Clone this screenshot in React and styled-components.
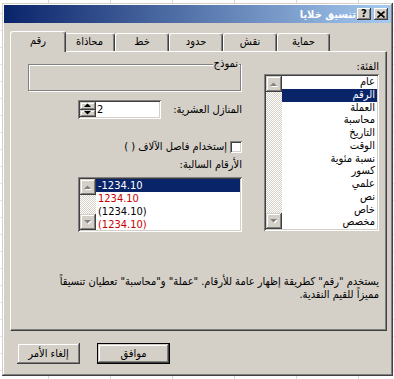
import styled, { createGlobalStyle } from "styled-components"

const Global = createGlobalStyle`
  html, body { margin: 0; }
  body {
    background-color: #fff;
    background-image:
      linear-gradient(to right, #d6d6d6 1px, transparent 1px),
      linear-gradient(to bottom, #e2e2e2 1px, transparent 1px);
    background-size: 62px 100%, 100% 17px;
    background-position: 48px 0, 0 13px;
    font-family: "DejaVu Sans Condensed", "DejaVu Sans", sans-serif;
    font-size: 11px;
    color: #000;
  }
`

const raised = `
  box-shadow: inset -1px -1px #404040, inset 1px 1px #d4d0c8,
    inset -2px -2px #808080, inset 2px 2px #fff;
`
const sunken = `
  box-shadow: inset 1px 1px #808080, inset -1px -1px #fff,
    inset 2px 2px #404040, inset -2px -2px #d4d0c8;
`

const Page = styled.div`
  padding: 3px 0 0 2px;
`

const Dialog = styled.div`
  width: 391px;
  height: 373px;
  box-sizing: border-box;
  padding: 2px;
  background: #d4d0c8;
  ${raised}
  display: flex;
  flex-direction: column;
`

const TitleBar = styled.div`
  height: 18px;
  display: flex;
  align-items: center;
  justify-content: flex-end;
  padding-right: 3px;
  background: linear-gradient(to right, #0a246a, #a6caf0);
  color: #fff;
  font-weight: bold;
`

const TitleText = styled.span`
  direction: rtl;
  margin-right: 1px;
`

const CaptionBtn = styled.div`
  width: 14px;
  height: 12px;
  box-sizing: border-box;
  margin-left: ${({ gap }) => gap || 0}px;
  background: #d4d0c8;
  box-shadow: inset -1px -1px #404040, inset 1px 1px #fff, inset -2px -2px #808080;
  display: flex;
  align-items: center;
  justify-content: center;
  color: #000;
  font-family: "DejaVu Sans", sans-serif;
  font-size: 10px;
  font-weight: bold;
  line-height: 1;
`

const Body = styled.div`
  flex: 1;
  padding: 8px 4px 0 6px;
  display: flex;
  flex-direction: column;
`

const TabStrip = styled.div`
  height: 20px;
  display: flex;
  align-items: flex-end;
  padding-left: 2px;
  position: relative;
  z-index: 1;
`

const Tab = styled.div`
  width: ${({ w, active }) => (active ? w + 4 : w)}px;
  height: ${({ active }) => (active ? 21 : 18)}px;
  margin: ${({ active }) => (active ? "0 -2px -1px -2px" : "0")};
  position: relative;
  z-index: ${({ active }) => (active ? 2 : 1)};
  box-sizing: border-box;
  background: #d4d0c8;
  border-top: 1px solid #fff;
  border-left: 1px solid #fff;
  border-right: 1px solid #404040;
  border-radius: 3px 3px 0 0;
  box-shadow: inset -1px 0 #808080;
  text-align: center;
  line-height: ${({ active }) => (active ? 17 : 15)}px;
  direction: rtl;
`

const Panel = styled.div`
  height: 280px;
  box-sizing: border-box;
  border-top: 1px solid #fff;
  border-left: 1px solid #fff;
  border-right: 1px solid #404040;
  border-bottom: 1px solid #404040;
  box-shadow: inset -1px -1px #808080;
  padding: 8px 7px 0 17px;
  direction: rtl;
`

const Columns = styled.div`
  display: flex;
  gap: 22px;
`

const CategoryCol = styled.div`
  width: 115px;
  display: flex;
  flex-direction: column;
`

const OptionsCol = styled.div`
  width: 214px;
  display: flex;
  flex-direction: column;
`

const Label = styled.div`
  height: ${({ h }) => h || 14}px;
  line-height: ${({ h }) => h || 14}px;
  margin-top: ${({ mt }) => mt || 0}px;
  white-space: nowrap;
`

const List = styled.div`
  width: ${({ w }) => w}px;
  height: ${({ h }) => h}px;
  box-sizing: border-box;
  padding: 2px;
  background: #fff;
  ${sunken}
  display: flex;
  direction: ltr;
`

const Scrollbar = styled.div`
  width: 16px;
  display: flex;
  flex-direction: column;
  justify-content: space-between;
  background: repeating-conic-gradient(#d4d0c8 0 25%, #fff 0 50%) 0 0 / 2px 2px;
`

const ArrowBtn = styled.div`
  width: 16px;
  height: 16px;
  background: #d4d0c8;
  ${raised}
  display: flex;
  align-items: center;
  justify-content: center;
`

const Items = styled.div`
  flex: 1;
  overflow: hidden;
  direction: ${({ rtl }) => (rtl ? "rtl" : "ltr")};
`

const Row = styled.div`
  height: ${({ h }) => h || 13}px;
  line-height: ${({ h }) => h || 13}px;
  padding: 0 2px;
  white-space: nowrap;
  color: ${({ sel, red }) => (sel ? "#fff" : red ? "#cc0000" : "#000")};
  background: ${({ sel }) => (sel ? "#0a246a" : "transparent")};
`

const GroupBox = styled.div`
  height: 27px;
  margin: 4px 1px 0 0;
  box-sizing: border-box;
  position: relative;
  border: 1px solid #808080;
  box-shadow: inset 1px 1px #fff, 1px 1px #fff;
`

const GroupLabel = styled.span`
  position: absolute;
  top: -8px;
  right: 1px;
  padding: 0 1px;
  background: #d4d0c8;
  line-height: 13px;
`

const FieldRow = styled.div`
  display: flex;
  align-items: center;
  margin-top: ${({ mt }) => mt || 0}px;
  gap: ${({ gap }) => gap || 0}px;
`

const SpinBox = styled.div`
  width: 83px;
  height: 19px;
  box-sizing: border-box;
  padding: 2px;
  background: #fff;
  ${sunken}
  display: flex;
  direction: ltr;
`

const SpinButtons = styled.div`
  width: 16px;
  display: flex;
  flex-direction: column;
`

const SpinBtn = styled.div`
  flex: 1;
  background: #d4d0c8;
  ${raised}
  display: flex;
  align-items: center;
  justify-content: center;
`

const SpinValue = styled.span`
  padding-left: 1px;
  line-height: 15px;
`

const CheckBox = styled.div`
  width: 12px;
  height: 12px;
  box-sizing: border-box;
  background: #fff;
  ${sunken}
`

const Description = styled.div`
  margin-top: 43px;
  line-height: 13px;
  white-space: nowrap;
`

const ButtonRow = styled.div`
  display: flex;
  gap: 17px;
  margin-top: 12px;
  padding-left: 7px;
`

const Button = styled.div`
  width: ${({ w }) => w}px;
  height: 21px;
  box-sizing: border-box;
  background: #d4d0c8;
  ${raised}
  border: ${({ primary }) => (primary ? "1px solid #000" : "none")};
  display: flex;
  align-items: center;
  justify-content: center;
  direction: rtl;
`

const Arrow = ({ up, color = "#808080", shadow = true }) => (
  <svg width="8" height="5" viewBox="0 0 8 5">
    {shadow && (
      <polygon
        points={up ? "1,5 8,5 4.5,1.5" : "1,1 8,1 4.5,4.5"}
        fill="#fff"
      />
    )}
    <polygon points={up ? "0,4 7,4 3.5,0.5" : "0,0 7,0 3.5,3.5"} fill={color} />
  </svg>
)

const categories = [
  "عام",
  "الرقم",
  "العملة",
  "محاسبة",
  "التاريخ",
  "الوقت",
  "نسبة مئوية",
  "كسور",
  "علمي",
  "نص",
  "خاص",
  "مخصص",
]

const negatives = [
  { t: "-1234.10", sel: true },
  { t: "1234.10", red: true },
  { t: "(1234.10)" },
  { t: "(1234.10)", red: true },
]

const tabs = [
  { t: "رقم", w: 52, active: true },
  { t: "محاذاة", w: 51 },
  { t: "خط", w: 54 },
  { t: "حدود", w: 54 },
  { t: "نقش", w: 54 },
  { t: "حماية", w: 53 },
]

const ListScroll = () => (
  <Scrollbar>
    <ArrowBtn>
      <Arrow up />
    </ArrowBtn>
    <ArrowBtn>
      <Arrow />
    </ArrowBtn>
  </Scrollbar>
)

export default function App() {
  return (
    <Page>
      <Global />
      <Dialog>
        <TitleBar>
          <TitleText>تنسيق خلايا</TitleText>
          <CaptionBtn>?</CaptionBtn>
          <CaptionBtn gap={3}>
            <svg width="8" height="7" viewBox="0 0 8 7">
              <path d="M0.5 0.5 L7.5 6.5 M7.5 0.5 L0.5 6.5" stroke="#000" strokeWidth="1.6" />
            </svg>
          </CaptionBtn>
        </TitleBar>
        <Body>
          <TabStrip>
            {tabs.map((tab) => (
              <Tab key={tab.t} w={tab.w} active={tab.active}>
                {tab.t}
              </Tab>
            ))}
          </TabStrip>
          <Panel>
            <Columns>
              <CategoryCol>
                <Label>الفئة:</Label>
                <List w={115} h={157}>
                  <ListScroll />
                  <Items rtl>
                    {categories.map((c) => (
                      <Row key={c} h={12.75} sel={c === "الرقم"}>
                        {c}
                      </Row>
                    ))}
                  </Items>
                </List>
              </CategoryCol>
              <OptionsCol>
                <GroupBox>
                  <GroupLabel>نموذج</GroupLabel>
                </GroupBox>
                <FieldRow mt={9}>
                  <Label style={{ width: 81 }}>المنازل العشرية:</Label>
                  <SpinBox>
                    <SpinButtons>
                      <SpinBtn>
                        <Arrow up color="#000" shadow={false} />
                      </SpinBtn>
                      <SpinBtn>
                        <Arrow color="#000" shadow={false} />
                      </SpinBtn>
                    </SpinButtons>
                    <SpinValue>2</SpinValue>
                  </SpinBox>
                </FieldRow>
                <FieldRow mt={22} gap={3}>
                  <CheckBox />
                  <Label h={12}>إستخدام فاصل الآلاف ( )</Label>
                </FieldRow>
                <Label h={13} mt={5}>الأرقام السالبة:</Label>
                <div style={{ marginTop: 6 }}>
                  <List w={164} h={55}>
                    <ListScroll />
                    <Items>
                      {negatives.map((n, i) => (
                        <Row key={i} sel={n.sel} red={n.red}>
                          {n.t}
                        </Row>
                      ))}
                    </Items>
                  </List>
                </div>
              </OptionsCol>
            </Columns>
            <Description>
              يستخدم "رقم" كطريقة إظهار عامة للأرقام. "عملة" و"محاسبة" تعطيان تنسيقاً
              <br />
              مميزاً للقيم النقدية.
            </Description>
          </Panel>
          <ButtonRow>
            <Button w={63}>إلغاء الأمر</Button>
            <Button w={73} primary>
              موافق
            </Button>
          </ButtonRow>
        </Body>
      </Dialog>
    </Page>
  )
}
